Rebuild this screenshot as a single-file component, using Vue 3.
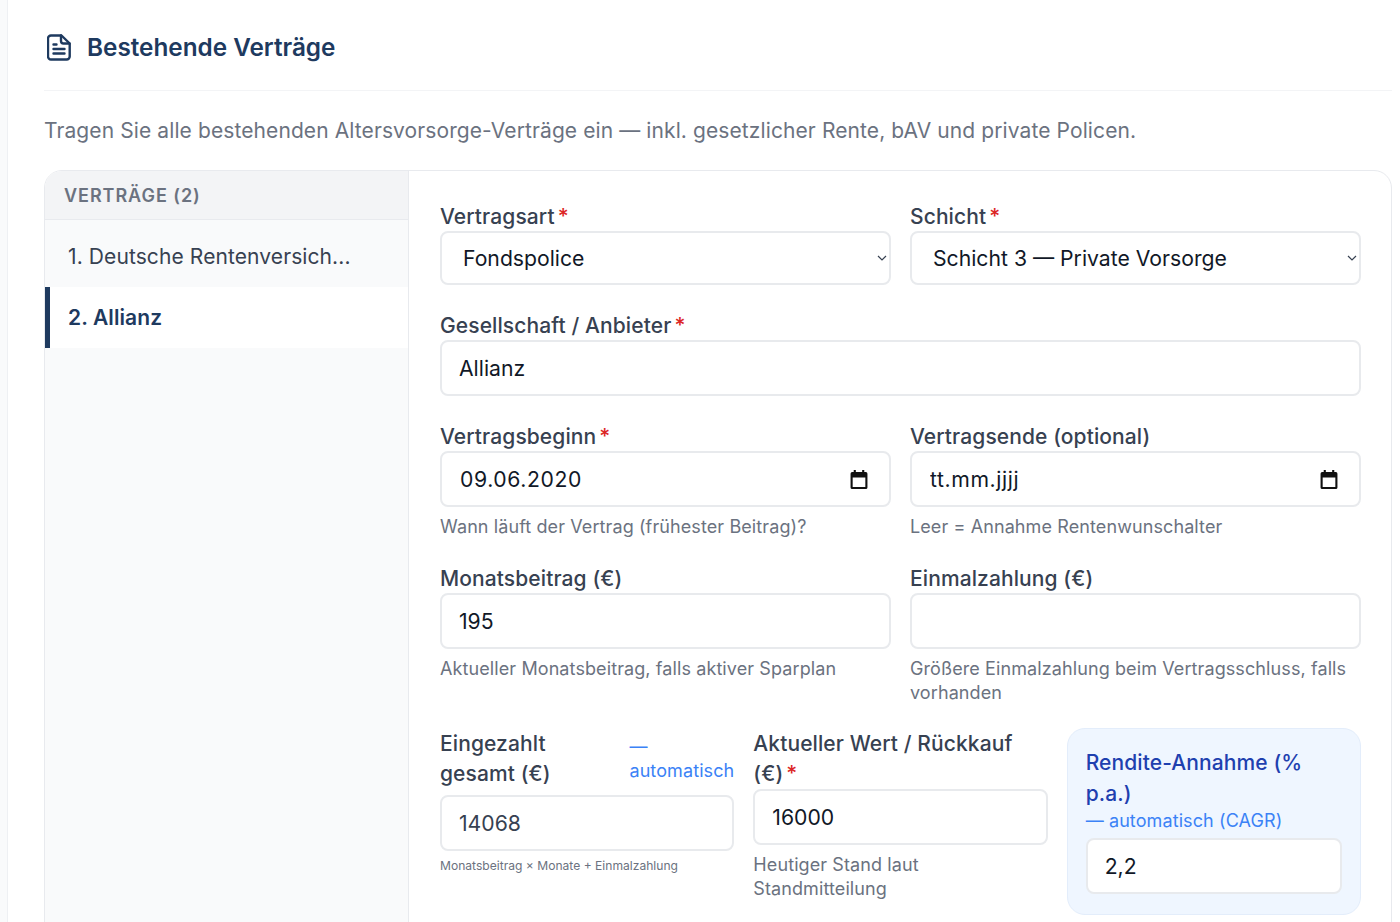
<script setup>
const contracts = ['1. Deutsche Rentenversich...', '2. Allianz']
</script>

<template>
  <div class="page">
    <header class="head">
      <svg class="doc" viewBox="0 0 24 27" fill="none" stroke="#1e3a5f" stroke-width="2.4" stroke-linejoin="round" stroke-linecap="round">
        <path d="M4 1.5h10.5L22.700 9.500V22.500a3 3 0 0 1-3 3H4a3 3 0 0 1-3-3v-18a3 3 0 0 1 3-3z" />
        <path d="M14 1.500v5.500a2.500 2.500 0 0 0 2.500 2.500h6" />
        <path d="M6.500 10.500h3M6.500 15h11M6.500 19.500h11" />
      </svg>
      <h1>Bestehende Verträge</h1>
    </header>
    <p class="intro">Tragen Sie alle bestehenden Altersvorsorge-Verträge ein — inkl. gesetzlicher Rente, bAV und private Policen.</p>

    <section class="panel">
      <aside class="side">
        <div class="side-head">VERTRÄGE (2)</div>
        <div class="item">{{ contracts[0] }}</div>
        <div class="item active">{{ contracts[1] }}</div>
      </aside>

      <form class="form">
        <div class="row two">
          <div class="field">
            <label>Vertragsart<b>*</b></label>
            <div class="control">
              <select class="input select"><option>Fondspolice</option></select>
              <svg class="chev" viewBox="0 0 10 6" fill="none" stroke="#374151" stroke-width="1.2"><path d="M1 1l4 4 4-4" /></svg>
            </div>
          </div>
          <div class="field">
            <label>Schicht<b>*</b></label>
            <div class="control">
              <select class="input select"><option>Schicht 3 — Private Vorsorge</option></select>
              <svg class="chev" viewBox="0 0 10 6" fill="none" stroke="#374151" stroke-width="1.2"><path d="M1 1l4 4 4-4" /></svg>
            </div>
          </div>
        </div>

        <div class="field single">
          <label>Gesellschaft / Anbieter<b>*</b></label>
          <input class="input tall" value="Allianz" />
        </div>

        <div class="row two">
          <div class="field">
            <label>Vertragsbeginn<b>*</b></label>
            <div class="control">
              <input class="input tall date" value="09.06.2020" />
              <svg class="cal" viewBox="0 0 16 18"><path fill="#111" d="M3 0h2v2h6V0h2v2h1.500A1.500 1.500 0 0 1 16 3.500V16.500A1.500 1.500 0 0 1 14.500 18h-13A1.500 1.500 0 0 1 0 16.500V3.500A1.500 1.500 0 0 1 1.500 2H3zM2 7v9h12V7z" /></svg>
            </div>
            <small>Wann läuft der Vertrag (frühester Beitrag)?</small>
          </div>
          <div class="field">
            <label>Vertragsende (optional)</label>
            <div class="control">
              <input class="input tall date" value="tt.mm.jjjj" />
              <svg class="cal" viewBox="0 0 16 18"><path fill="#111" d="M3 0h2v2h6V0h2v2h1.500A1.500 1.500 0 0 1 16 3.500V16.500A1.500 1.500 0 0 1 14.500 18h-13A1.500 1.500 0 0 1 0 16.500V3.500A1.500 1.500 0 0 1 1.500 2H3zM2 7v9h12V7z" /></svg>
            </div>
            <small>Leer = Annahme Rentenwunschalter</small>
          </div>
        </div>

        <div class="row two">
          <div class="field">
            <label>Monatsbeitrag (€)</label>
            <input class="input tall" value="195" />
            <small>Aktueller Monatsbeitrag, falls aktiver Sparplan</small>
          </div>
          <div class="field">
            <label>Einmalzahlung (€)</label>
            <input class="input tall" />
            <small>Größere Einmalzahlung beim Vertragsschluss, falls vorhanden</small>
          </div>
        </div>

        <div class="row three">
          <div class="field">
            <label class="split"><span class="split-text">Eingezahlt gesamt (€)</span><span class="auto">— automatisch</span></label>
            <input class="input tall muted" value="14068" readonly />
            <small class="tiny">Monatsbeitrag × Monate + Einmalzahlung</small>
          </div>
          <div class="field">
            <label class="wrapped">Aktueller Wert / Rückkauf (€)<b>*</b></label>
            <input class="input tall" value="16000" />
            <small>Heutiger Stand laut Standmitteilung</small>
          </div>
          <div class="field blue">
            <label>Rendite-Annahme (% p.a.)</label>
            <span class="auto block">— automatisch (CAGR)</span>
            <input class="input tall" value="2,2" />
          </div>
        </div>
      </form>
    </section>
  </div>
</template>

<style>
html, body { margin: 0; height: 922px; overflow: hidden; background: #f9fafb; }
</style>

<style scoped>
* { box-sizing: border-box; }
.page {
  margin-left: 7px;
  height: 922px;
  padding: 0 8px 0 36px;
  background: #fff;
  border-left: 1px solid #eef0f3;
  font-family: Inter, "Liberation Sans", sans-serif;
  letter-spacing: 0.1px;
  overflow: hidden;
}
.head {
  height: 91px;
  display: flex;
  align-items: center;
  padding: 4px 0 0 3px;
  border-bottom: 1px solid #f3f4f6;
}
.doc { width: 24px; height: 27px; margin-right: 16px; }
h1 { margin: 0; font-size: 24.3px; font-weight: 600; letter-spacing: 0; color: #1e3a5f; }
.intro { margin: 0; height: 79px; padding-top: 24px; line-height: 32px; font-size: 21px; color: #6b7280; }
.panel {
  display: flex;
  height: 900px;
  border: 1px solid #e8eaee;
  border-radius: 18px;
  overflow: hidden;
}
.side {
  width: 364px;
  flex: none;
  background: #f9fafb;
  border-right: 1px solid #e8eaee;
}
.side-head {
  height: 49px;
  padding-left: 19px;
  line-height: 49px;
  font-size: 18px;
  font-weight: 600;
  letter-spacing: 0.95px;
  color: #6b7280;
  background: #f3f4f6;
  border-bottom: 1px solid #e8eaee;
}
.item {
  height: 67px;
  padding-left: 23px;
  line-height: 73px;
  font-size: 21px;
  color: #374151;
}
.item.active {
  height: 61px;
  padding-left: 18px;
  line-height: 61px;
  font-weight: 600;
  color: #1e3a5f;
  background: #fff;
  border-left: 5px solid #1e3a5f;
}
.form { flex: 1; min-width: 0; padding: 29px 30px 0 31px; }
.row { display: grid; gap: 19px; }
.two { grid-template-columns: 1fr 1fr; margin-bottom: 24px; }
.three { grid-template-columns: 1fr 1fr 1fr; align-items: start; }
.field { min-width: 0; display: flex; flex-direction: column; }
.single { margin-bottom: 24px; }
label { margin-bottom: -3px; font-size: 21px; line-height: 34px; font-weight: 500; color: #374151; }
label b { margin-left: 3px; color: #dc2626; font-weight: 500; }
.wrapped { margin-bottom: 0; padding-top: 1px; line-height: 30px; }
.control { position: relative; }
.input {
  display: block;
  width: 100%;
  height: 54px;
  padding: 0 17px;
  border: 2px solid #e8eaed;
  border-radius: 8px;
  background: #fff;
  font: 400 21.2px Inter, "Liberation Sans", sans-serif;
  color: #111827;
  outline: none;
}
.tall { height: 56px; }
.select { appearance: none; padding-left: 21px; }
.chev { position: absolute; right: 4px; top: 24px; width: 10px; height: 6px; }
.date { padding-left: 18px; letter-spacing: 0.6px; }
.cal { position: absolute; right: 23px; top: 19px; width: 18px; height: 19px; }
.muted { color: #374151; }
small { display: block; margin: 8px 0 -1px; font-size: 18px; line-height: 24px; color: #6b7280; }
.tiny { margin: 6px 0 0; font-size: 12.1px; line-height: 18px; letter-spacing: 0; }
.split { display: flex; align-items: center; gap: 10px; margin-bottom: 6px; padding-top: 1px; line-height: 30px; }
.split-text { flex: 1; max-width: 180px; margin-right: auto; }
.auto { flex: 0 0 104px; font-size: 18px; line-height: 24px; font-weight: 400; color: #3b82f6; }
.blue {
  padding: 18px;
  height: 187px;
  background: #eff6ff;
  border: 1px solid #e3edfb;
  border-radius: 18px;
}
.blue label { margin-bottom: 0; line-height: 31px; color: #1e40af; }
.block { display: block; margin-top: 0; margin-bottom: 5px; flex: none; }
</style>
